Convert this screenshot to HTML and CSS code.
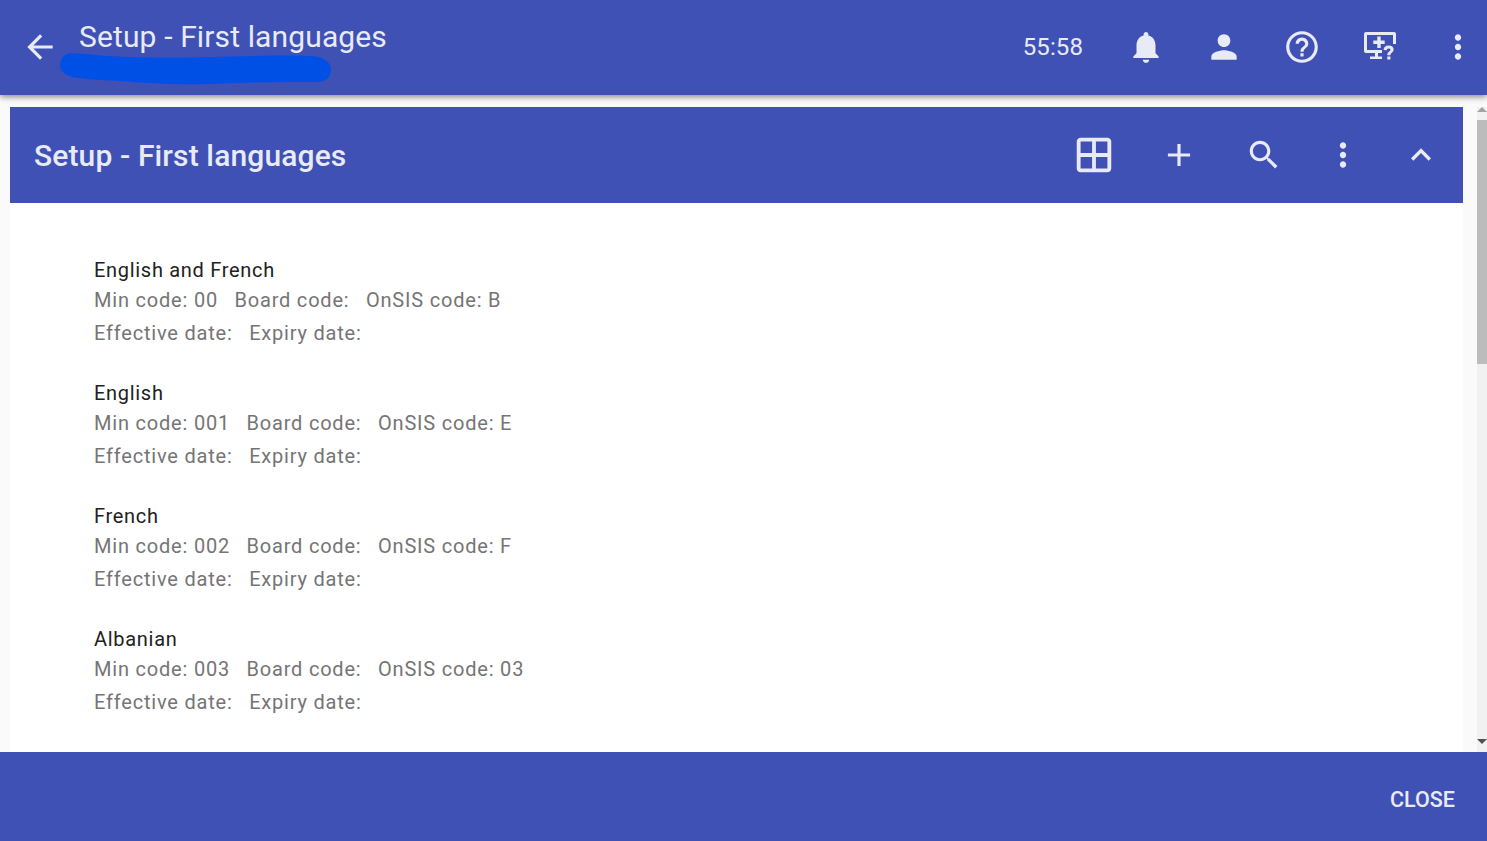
FILE: index.html
```html
<!DOCTYPE html>
<html lang="en">
<head>
  <meta charset="UTF-8" />
  <title>Setup - First languages</title>
  <link rel="stylesheet" href="styles.css">
</head>
<body>

  <!-- Top bar -->
  <header class="topbar">
    <svg class="icono voltar" viewBox="0 0 24 24"><path d="M20 11H7.83l5.59-5.59L12 4l-8 8 8 8 1.41-1.41L7.83 13H20v-2z"/></svg>
    <h1 class="topbar-titulo">Setup - First languages</h1>
    <svg class="risco" viewBox="0 0 272 32"><path d="M12 0C30 1 50 4 70 4C100 5 125 5 150 4C190 3 225 2 250 3C262 3 271 9 271 16C271 24 266 29 258 29C225 29 190 29 150 31C115 32 85 30 60 28C40 27 22 26 12 24C4 21 0 18 0 13C0 5 5 0 12 0z"/></svg>
    <span class="relogio">55:58</span>
    <div class="topbar-icones">
      <svg class="icono" viewBox="0 0 24 24"><path d="M12 22c1.100 0 2-.9 2-2h-4c0 1.100.9 2 2 2zm6-6v-5c0-3.070-1.630-5.640-4.500-6.320V4c0-.83-.67-1.500-1.500-1.500s-1.500.67-1.500 1.500v.68C7.640 5.360 6 7.920 6 11v5l-2 2v1h16v-1l-2-2z"/></svg>
      <svg class="icono" viewBox="0 0 24 24"><path d="M12 12c2.210 0 4-1.790 4-4s-1.790-4-4-4-4 1.790-4 4 1.790 4 4 4zm0 2c-2.670 0-8 1.340-8 4v2h16v-2c0-2.660-5.330-4-8-4z"/></svg>
      <svg class="icono" viewBox="0 0 24 24"><path d="M11 18h2v-2h-2v2zm1-16C6.480 2 2 6.480 2 12s4.480 10 10 10 10-4.480 10-10S17.520 2 12 2zm0 18c-4.410 0-8-3.590-8-8s3.590-8 8-8 8 3.590 8 8-3.590 8-8 8zm0-14c-2.210 0-4 1.790-4 4h2c0-1.100.9-2 2-2s2 .9 2 2c0 2-3 1.750-3 5h2c0-2.250 3-2.500 3-5 0-2.210-1.790-4-4-4z"/></svg>
      <svg class="icono monitor" viewBox="0 0 38 38"><path d="M5 4h28a2 2 0 0 1 2 2v10h-3V7H6v15h15v3h-4v3.500h4V31H9v-2.500h5V25H5a2 2 0 0 1-2-2V6a2 2 0 0 1 2-2z"/><path d="M16.300 8.500h3.400v4h4v3.400h-4v4h-3.400v-4h-4v-3.400h4z"/><path d="M22.600 22c0-2.900 2-4.500 5-4.500s5 1.600 5 4c0 3.200-3.200 3-3.200 5.800h-3.100c0-3.900 3.100-3.600 3.100-5.600 0-.8-.7-1.300-1.800-1.300-1.200 0-1.800.7-1.900 1.800zM26.300 28.500h3.100v3h-3.100z"/></svg>
      <svg class="icono" viewBox="0 0 24 24"><path d="M12 8c1.100 0 2-.9 2-2s-.9-2-2-2-2 .9-2 2 .9 2 2 2zm0 2c-1.100 0-2 .9-2 2s.9 2 2 2 2-.9 2-2-.9-2-2-2zm0 6c-1.100 0-2 .9-2 2s.9 2 2 2 2-.9 2-2-.9-2-2-2z"/></svg>
    </div>
  </header>

  <div class="corpo">
    <main class="painel">
      <div class="painel-topo">
        <h2 class="painel-titulo">Setup - First languages</h2>
        <div class="painel-icones">
          <svg class="icono grade" viewBox="0 0 24 24"><path d="M3 5v14c0 1.100.9 2 2 2h14c1.100 0 2-.9 2-2V5c0-1.100-.9-2-2-2H5c-1.100 0-2 .9-2 2zm8 14H5v-6h6v6zm0-8H5V5h6v6zm8 8h-6v-6h6v6zm0-8h-6V5h6v6z"/></svg>
          <svg class="icono" viewBox="0 0 24 24"><path d="M19 13h-6v6h-2v-6H5v-2h6V5h2v6h6v2z"/></svg>
          <svg class="icono busca" viewBox="0 0 24 24"><path d="M15.500 14h-.79l-.28-.27C15.410 12.590 16 11.110 16 9.500 16 5.910 13.090 3 9.500 3S3 5.910 3 9.500 5.910 16 9.500 16c1.610 0 3.090-.59 4.230-1.570l.27.28v.79l5 4.990L20.490 19l-4.990-5zm-6 0C7.010 14 5 11.990 5 9.500S7.010 5 9.500 5 14 7.010 14 9.500 11.990 14 9.500 14z"/></svg>
          <svg class="icono pontos" viewBox="0 0 24 24"><path d="M12 8c1.100 0 2-.9 2-2s-.9-2-2-2-2 .9-2 2 .9 2 2 2zm0 2c-1.100 0-2 .9-2 2s.9 2 2 2 2-.9 2-2-.9-2-2-2zm0 6c-1.100 0-2 .9-2 2s.9 2 2 2 2-.9 2-2-.9-2-2-2z"/></svg>
          <svg class="icono recolher" viewBox="0 0 24 24"><path d="M12 8l-6 6 1.410 1.410L12 10.830l4.590 4.580L18 14z"/></svg>
        </div>
      </div>

      <div class="lista">
        <div class="item">
          <div class="nome">English and French</div>
          <div class="linha"><span>Min code: 00</span><span>Board code:</span><span>OnSIS code: B</span></div>
          <div class="linha"><span>Effective date:</span><span>Expiry date:</span></div>
        </div>
        <div class="item">
          <div class="nome">English</div>
          <div class="linha"><span>Min code: 001</span><span>Board code:</span><span>OnSIS code: E</span></div>
          <div class="linha"><span>Effective date:</span><span>Expiry date:</span></div>
        </div>
        <div class="item">
          <div class="nome">French</div>
          <div class="linha"><span>Min code: 002</span><span>Board code:</span><span>OnSIS code: F</span></div>
          <div class="linha"><span>Effective date:</span><span>Expiry date:</span></div>
        </div>
        <div class="item">
          <div class="nome">Albanian</div>
          <div class="linha"><span>Min code: 003</span><span>Board code:</span><span>OnSIS code: 03</span></div>
          <div class="linha"><span>Effective date:</span><span>Expiry date:</span></div>
        </div>
      </div>
    </main>

    <!-- Scrollbar -->
    <div class="barra-rolagem">
      <div class="seta-cima"></div>
      <div class="polegar"></div>
      <div class="seta-baixo"></div>
    </div>
  </div>

  <footer class="rodape">
    <button class="botao-fechar">CLOSE</button>
  </footer>

</body>
</html>
```

FILE: styles.css
```css
html, body {
  height: 100%;
}

body {
  font-family: Roboto, "Liberation Sans", sans-serif;
  background: #fafafa;
  margin: 0;
  height: 841px;
  display: flex;
  flex-direction: column;
  overflow: hidden;
}

.icono {
  fill: #e8eaf6;
  display: block;
  flex-shrink: 0;
}

.topbar {
  box-sizing: border-box;
  position: relative;
  z-index: 2;
  height: 95px;
  flex-shrink: 0;
  background: #3f51b5;
  display: flex;
  align-items: center;
  padding: 0 10px 2px 21px;
  box-shadow: 0 2px 6px rgba(0,0,0,0.45);
}

.voltar {
  width: 38px;
  height: 38px;
}

.topbar-titulo {
  font-size: 30px;
  font-weight: 400;
  letter-spacing: 0.13px;
  color: #e8eaf6;
  margin: -21px 0 0 20px;
  flex: 1;
}

.risco {
  position: absolute;
  left: 60px;
  top: 53px;
  width: 272px;
  height: 32px;
  fill: #0050e6;
}

.relogio {
  font-size: 24px;
  letter-spacing: 0.1px;
  color: #e8eaf6;
  margin-right: 44px;
}

.topbar-icones {
  display: flex;
  gap: 40px;
}

.topbar-icones .icono {
  width: 38px;
  height: 38px;
}

.corpo {
  flex: 1;
  min-height: 0;
  display: flex;
  padding: 12px 0 0 10px;
}

.painel {
  flex: 1;
  background: #fff;
  overflow: hidden;
}

.painel-topo {
  height: 96px;
  background: #3f51b5;
  display: flex;
  align-items: center;
  justify-content: space-between;
  padding: 0 22px 0 24px;
}

.painel-titulo {
  font-size: 30px;
  font-weight: 500;
  letter-spacing: 0.13px;
  color: #e8eaf6;
  margin: 0;
}

.painel-icones {
  display: flex;
  align-items: center;
  gap: 43px;
}

.painel-icones .icono {
  width: 38px;
  height: 38px;
}

.painel-icones .grade {
  width: 46px;
  height: 46px;
}

.painel-icones .busca {
  margin-left: 4px;
}

.painel-icones .pontos {
  margin-left: -2px;
}

.painel-icones .recolher {
  width: 40px;
  height: 40px;
  margin-left: -4px;
}

.lista {
  padding: 53px 84px 0;
}

.item {
  margin-bottom: 29px;
}

.nome {
  font-size: 20px;
  line-height: 28px;
  color: #212121;
  letter-spacing: 0.7px;
}

.linha {
  font-size: 20px;
  line-height: 33px;
  color: #757575;
  letter-spacing: 0.8px;
  display: flex;
  gap: 16.5px;
}

.barra-rolagem {
  width: 10px;
  margin-left: 14px;
  background: #f1f1f1;
  display: flex;
  flex-direction: column;
  align-items: center;
  justify-content: space-between;
}

.polegar {
  width: 10px;
  height: 244px;
  background: #bcbcbc;
  margin-top: 8px;
  margin-bottom: auto;
}

.seta-cima, .seta-baixo {
  width: 0;
  height: 0;
  border-left: 5px solid transparent;
  border-right: 5px solid transparent;
}

.seta-cima {
  border-bottom: 5px solid #a3a3a3;
}

.seta-baixo {
  border-top: 5px solid #505050;
  margin-bottom: 8px;
}

.rodape {
  box-sizing: border-box;
  height: 89px;
  flex-shrink: 0;
  background: #3f51b5;
  display: flex;
  align-items: center;
  justify-content: flex-end;
  padding: 5px 32px 0;
}

.botao-fechar {
  background: none;
  border: none;
  padding: 0;
  font-family: inherit;
  font-size: 21.5px;
  font-weight: 500;
  color: #e8eaf6;
  cursor: pointer;
}
```
